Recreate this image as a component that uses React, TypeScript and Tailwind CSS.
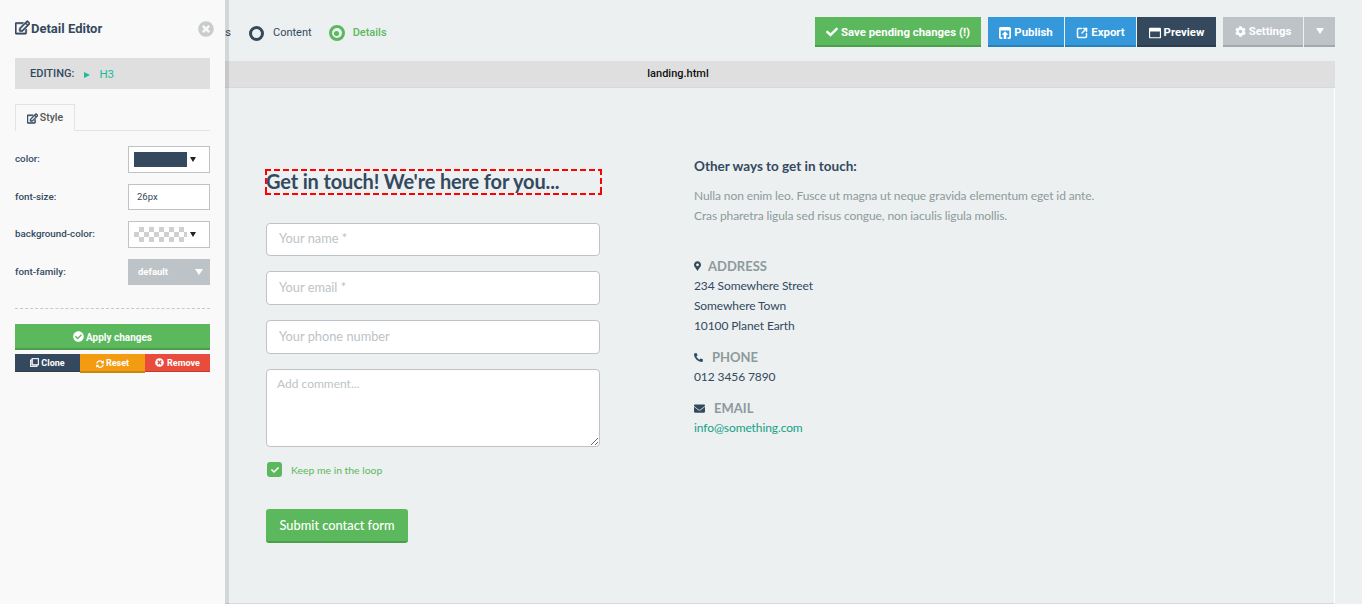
import { FaRegEdit, FaCheck, FaTimesCircle, FaCheckCircle, FaCog, FaSyncAlt, FaRegClone, FaMapMarkerAlt, FaPhoneAlt, FaEnvelope, FaRegWindowMaximize } from 'react-icons/fa';
import { SquareArrowOutUpRight } from 'lucide-react';

const ui = "font-['Roboto',sans-serif]";

function PublishIcon() {
  return (
    <svg viewBox="0 0 14 14" className="w-[12px] h-[12px]" fill="currentColor">
      <path d="M2 0h10a2 2 0 0 1 2 2v10a2 2 0 0 1-2 2h-2v-2h2V4H2v8h2v2H2a2 2 0 0 1-2-2V2a2 2 0 0 1 2-2z" />
      <path d="M7 5l4 4H8.5v5h-3V9H3z" />
    </svg>
  );
}

function TopButton({ icon, label, className }: { icon: React.ReactNode; label: string; className: string }) {
  return (
    <button className={`h-[30px] flex items-center justify-center gap-[3px] text-white text-[11.4px] font-bold border-b-2 pt-[3px] ${className}`}>
      {icon}
      {label}
    </button>
  );
}

function Caret() {
  return <span className="ml-[3px] w-0 h-0 border-x-[3px] border-x-transparent border-t-[5px] border-t-[#222]" />;
}

function Field({ label, children }: { label: string; children: React.ReactNode }) {
  return (
    <div className="flex items-center justify-between">
      <span className="text-[9.8px] font-medium text-[#34495e]">{label}</span>
      {children}
    </div>
  );
}

function DetailEditor() {
  return (
    <aside className={`${ui} absolute left-0 top-0 h-full w-[229px] bg-[#f9f9f9] bg-clip-padding border-r-4 border-black/10 pl-[15px] pr-[15px]`}>
      <div className="flex items-center justify-between h-[58px] pb-[1px] text-[#34495e]">
        <div className="flex items-center gap-[1px] text-[13px] font-bold">
          <FaRegEdit className="w-[15px] h-[15px] -mt-[2px]" stroke="currentColor" strokeWidth={24} />
          Detail Editor
        </div>
        <FaTimesCircle className="w-[16px] h-[16px] text-[#c9cccd] mr-[-4px]" />
      </div>

      <div className="h-[31px] bg-[#dfdfdf] flex items-center pl-[15px] pt-[2px] text-[11px] font-medium text-[#34495e]">
        EDITING:
        <span className="ml-[10px] w-0 h-0 border-y-[3.5px] border-y-transparent border-l-[6px] border-l-[#1abc9c]" />
        <span className="ml-[9px] text-[11.5px] text-[#1abc9c] font-normal">H3</span>
      </div>

      <div className="mt-[15px] h-[27px] border-b border-[#e0e4e5]">
        <div className="w-[60px] h-[27px] bg-[#f9f9f9] border border-b-0 border-[#e0e4e5] flex items-center justify-center gap-[2px] text-[10.5px] font-medium text-[#555]">
          <FaRegEdit className="w-[11px] h-[11px] text-[#34495e]" stroke="currentColor" strokeWidth={30} />
          Style
        </div>
      </div>

      <div className="mt-[15px] flex flex-col gap-[11px]">
        <Field label="color:">
          <div className="w-[82px] h-[27px] bg-white border border-[#bdc3c7] flex items-center pl-[5px]">
            <div className="w-[53px] h-[15px] bg-[#34495e]" />
            <Caret />
          </div>
        </Field>
        <Field label="font-size:">
          <div className="w-[82px] h-[26px] bg-white border border-[#bdc3c7] flex items-center pl-[8px] text-[9.5px] text-[#34495e]">
            26px
          </div>
        </Field>
        <Field label="background-color:">
          <div className="w-[82px] h-[27px] bg-white border border-[#bdc3c7] flex items-center pl-[5px]">
            <div className="w-[53px] h-[15px] bg-[conic-gradient(#d0d0d0_25%,#fff_25%_50%,#d0d0d0_50%_75%,#fff_75%)] bg-[length:10px_10px]" />
            <Caret />
          </div>
        </Field>
        <Field label="font-family:">
          <div className="w-[82px] h-[26px] bg-[#bdc3c7] flex items-center justify-between pl-[10px] pr-[7px] text-[9.5px] font-bold text-white">
            default
            <span className="w-0 h-0 border-x-[4.5px] border-x-transparent border-t-[6px] border-t-white" />
          </div>
        </Field>
      </div>

      <div className="mt-[23px] border-t border-dashed border-[#c8c8c8]" />

      <button className="mt-[15px] w-full h-[26px] pt-[2px] bg-[#5cb85c] border-b-2 border-[#4c9e4c] flex items-center justify-center gap-[2px] text-white text-[10px] font-bold">
        <FaCheckCircle className="w-[11px] h-[11px] -mt-[2px]" />
        Apply changes
      </button>

      <div className="mt-[4px] flex items-start">
        <button className="w-[65px] h-[18px] pt-[2px] bg-[#34495e] border-b border-[#2c3e50] flex items-center justify-center gap-[2px] text-white text-[9px] font-bold">
          <FaRegClone className="w-[9px] h-[9px] -mt-[2px]" stroke="currentColor" strokeWidth={30} />
          Clone
        </button>
        <button className="w-[65px] h-[19px] pt-[2px] bg-[#f39c12] border-b-2 border-[#cc8410] flex items-center justify-center gap-[2px] text-white text-[9px] font-bold">
          <FaSyncAlt className="w-[8px] h-[8px]" />
          Reset
        </button>
        <button className="w-[65px] h-[18px] pt-[2px] bg-[#e74c3c] border-b border-[#c0392b] flex items-center justify-center gap-[3px] text-white text-[9px] font-bold">
          <FaTimesCircle className="w-[9px] h-[9px] -mt-[2px]" />
          Remove
        </button>
      </div>
    </aside>
  );
}

function TopBar() {
  return (
    <div className={`${ui} h-[61px] flex items-center justify-between pt-[3px] w-[1335px]`}>
      <div className="flex items-center text-[11px] pt-[2px]">
        <span className="w-[231px] text-right text-[#34495e]">Elements</span>
        <span className="ml-[18px] w-[15px] h-[15px] rounded-full border-[3px] border-[#34495e]" />
        <span className="ml-[9px] text-[#34495e]">Content</span>
        <span className="ml-[17px] w-[16px] h-[16px] rounded-full border-[3px] border-[#5cb85c] flex items-center justify-center">
          <span className="w-[5px] h-[5px] rounded-full bg-[#5cb85c]" />
        </span>
        <span className="ml-[8px] text-[#5cb85c] font-medium">Details</span>
      </div>
      <div className="flex items-center">
        <TopButton icon={<FaCheck className="w-[12px] h-[12px] -mt-[2px]" />} label="Save pending changes (!)" className="w-[166px] bg-[#5cb85c] border-[#4c9e4c]" />
        <div className="ml-[7px] flex">
          <TopButton icon={<PublishIcon />} label="Publish" className="w-[76px] bg-[#3498db] border-[#2980b9]" />
          <TopButton icon={<SquareArrowOutUpRight className="w-[12px] h-[12px]" strokeWidth={3} />} label="Export" className="ml-px w-[71px] bg-[#3498db] border-[#2980b9]" />
          <TopButton icon={<FaRegWindowMaximize className="w-[12px] h-[12px]" />} label="Preview" className="ml-px w-[79px] bg-[#34495e] border-[#2c3e50]" />
        </div>
        <div className="ml-[7px] flex">
          <TopButton icon={<FaCog className="w-[11px] h-[11px]" />} label="Settings" className="w-[80px] bg-[#bdc3c7] border-[#a5a9ac] !pt-[1px]" />
          <button className="ml-px w-[31px] h-[30px] bg-[#bdc3c7] border-b-2 border-[#a5a9ac] flex items-center justify-center">
            <span className="w-0 h-0 border-x-[4px] border-x-transparent border-t-[6px] border-t-white" />
          </button>
        </div>
      </div>
    </div>
  );
}

const inputClass = "block w-[334px] bg-white border border-[#bdc3c7] rounded-[4px] px-[12px] outline-none text-[12.8px] placeholder:text-[#bdc3c7]";

function ContactForm() {
  return (
    <div className="w-[334px]">
      <h3 className="h-[26px] -ml-[1px] w-[337px] [background:linear-gradient(90deg,#f00_6px,transparent_6px)_top_left/9px_2px_repeat-x,linear-gradient(90deg,#f00_6px,transparent_6px)_bottom_left/9px_2px_repeat-x,linear-gradient(#f00_6px,transparent_6px)_top_left/2px_9px_repeat-y,linear-gradient(#f00_6px,transparent_6px)_top_right/2px_9px_repeat-y] text-[20px] tracking-[-0.15px] leading-[25px] font-bold text-[#34495e] pl-[1px]">
        Get in touch! We're here for you...
      </h3>
      <input placeholder="Your name *" className={`${inputClass} mt-[28px] h-[33px] pb-[3px]`} />
      <input placeholder="Your email *" className={`${inputClass} mt-[15px] h-[34px] pb-[3px]`} />
      <input placeholder="Your phone number" className={`${inputClass} mt-[15px] h-[34px] pb-[3px]`} />
      <textarea placeholder="Add comment..." className={`${inputClass} mt-[15px] h-[78px] pt-[6px] !px-[10px] !text-[12px] leading-[16px]`} />
      <label className="mt-[15px] flex items-center gap-[9px] ml-[1px] text-[10.4px] text-[#5cb85c] h-[15px]">
        <span className="w-[15px] h-[15px] rounded-[3px] bg-[#5cb85c] flex items-center justify-center">
          <FaCheck className="w-[8px] h-[8px] text-white" />
        </span>
        <span className="mt-[2px]">Keep me in the loop</span>
      </label>
      <button className="mt-[32px] block w-[142px] h-[34px] pt-[2px] rounded-[3px] bg-[#5cb85c] border-b-2 border-[#4c9e4c] text-white text-[12.8px] font-medium">
        Submit contact form
      </button>
    </div>
  );
}

function ContactInfo() {
  return (
    <div className="text-[12px] tracking-[-0.1px] leading-[20px] text-[#34495e]">
      <h4 className="text-[13.5px] tracking-normal font-bold leading-[20px]">Other ways to get in touch:</h4>
      <p className="mt-[10px] text-[#8d9a9b]">
        Nulla non enim leo. Fusce ut magna ut neque gravida elementum eget id ante.
        <br />
        Cras pharetra ligula sed risus congue, non iaculis ligula mollis.
      </p>
      <div className="mt-[30px] flex items-center gap-[7px] text-[13px] tracking-normal font-bold text-[#8d9a9b]">
        <FaMapMarkerAlt className="w-[7px] h-[10px] text-[#34495e]" />
        ADDRESS
      </div>
      <div>234 Somewhere Street</div>
      <div>Somewhere Town</div>
      <div>10100 Planet Earth</div>
      <div className="mt-[11px] flex items-center gap-[9px] text-[13px] tracking-normal font-bold text-[#8d9a9b]">
        <FaPhoneAlt className="w-[9px] h-[9px] text-[#34495e]" />
        PHONE
      </div>
      <div>012 3456 7890</div>
      <div className="mt-[11px] flex items-center gap-[9px] text-[13px] tracking-normal font-bold text-[#8d9a9b]">
        <FaEnvelope className="w-[11px] h-[11px] text-[#34495e]" />
        EMAIL
      </div>
      <a className="text-[#16a085]">info@something.com</a>
    </div>
  );
}

export default function App() {
  return (
    <div className="relative w-[1362px] h-[604px] overflow-hidden bg-[#ecf0f1] font-['Lato',sans-serif]">
      <TopBar />
      <div className="ml-[21px] w-[1314px]">
        <div className={`${ui} h-[27px] bg-[#dfdfdf] border-b border-[#d5d9da] flex items-center justify-center text-[11px] font-medium text-[#111]`}>
          landing.html
        </div>
        <div className="h-[516px] border-r border-white border-b border-b-[#d5d9da] pl-[245px] pt-[81px] flex">
          <ContactForm />
          <div className="ml-[94px] -mt-[13px]">
            <ContactInfo />
          </div>
        </div>
      </div>
      <DetailEditor />
    </div>
  );
}
